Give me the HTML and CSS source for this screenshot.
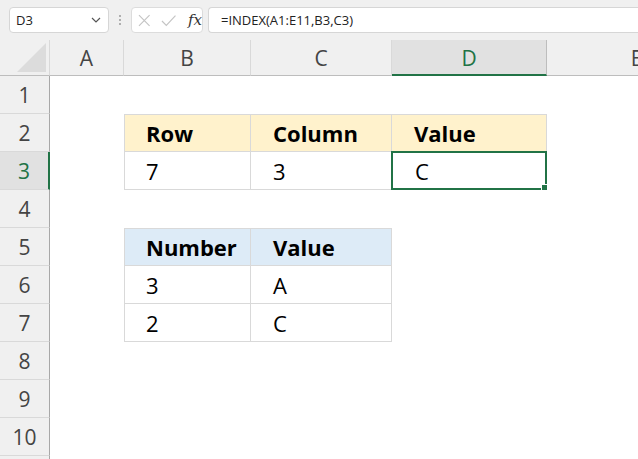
FILE: index.html
```html
<!DOCTYPE html>
<html>
<head>
<meta charset="utf-8">
<link rel="stylesheet" href="styles.css">
</head>
<body>
<div class="app">
  <div class="formula-bar">
    <div class="name-box">
      <span class="name-text">D3</span>
      <svg class="chev" width="10" height="6" viewBox="0 0 10 6"><path d="M1 1 L5 5 L9 1" fill="none" stroke="#555" stroke-width="1.2"/></svg>
    </div>
    <div class="dots"><span></span><span></span><span></span></div>
    <div class="fx-box">
      <svg width="13" height="13" viewBox="0 0 13 13"><path d="M1 1 L12 12 M12 1 L1 12" stroke="#c4c4c4" stroke-width="1.2" fill="none"/></svg>
      <svg width="16" height="13" viewBox="0 0 16 13"><path d="M1 7 L5.5 11.5 L15 1.5" stroke="#c4c4c4" stroke-width="1.2" fill="none"/></svg>
      <span class="fx">fx</span>
    </div>
    <div class="formula-input">=INDEX(A1:E11,B3,C3)</div>
  </div>
  <div class="sheet">
    <div class="corner"><div class="tri"></div></div>
    <div class="ch">A</div>
    <div class="ch">B</div>
    <div class="ch">C</div>
    <div class="ch sel">D</div>
    <div class="ch">E</div>

    <div class="rh">1</div><div class="c"></div><div class="c"></div><div class="c"></div><div class="c"></div><div class="c"></div>

    <div class="rh">2</div><div class="c"></div>
    <div class="c t y top left b">Row</div>
    <div class="c t y top b">Column</div>
    <div class="c t y top b">Value</div>
    <div class="c"></div>

    <div class="rh sel">3</div><div class="c"></div>
    <div class="c t left">7</div>
    <div class="c t">3</div>
    <div class="c t active">C</div>
    <div class="c"></div>

    <div class="rh">4</div><div class="c"></div><div class="c"></div><div class="c"></div><div class="c"></div><div class="c"></div>

    <div class="rh">5</div><div class="c"></div>
    <div class="c t bl top left b">Number</div>
    <div class="c t bl top b">Value</div>
    <div class="c"></div><div class="c"></div>

    <div class="rh">6</div><div class="c"></div>
    <div class="c t left">3</div>
    <div class="c t">A</div>
    <div class="c"></div><div class="c"></div>

    <div class="rh">7</div><div class="c"></div>
    <div class="c t left">2</div>
    <div class="c t">C</div>
    <div class="c"></div><div class="c"></div>

    <div class="rh">8</div><div class="c"></div><div class="c"></div><div class="c"></div><div class="c"></div><div class="c"></div>
    <div class="rh">9</div><div class="c"></div><div class="c"></div><div class="c"></div><div class="c"></div><div class="c"></div>
    <div class="rh">10</div><div class="c"></div><div class="c"></div><div class="c"></div><div class="c"></div><div class="c"></div>
    <div class="rh"></div><div class="c"></div><div class="c"></div><div class="c"></div><div class="c"></div><div class="c"></div>
  </div>
</div>
</body>
</html>
```

FILE: styles.css
```css
* { box-sizing: border-box; }
html, body { margin: 0; padding: 0; }
body {
  width: 638px;
  height: 459px;
  overflow: hidden;
  background: #f0f0f0;
  font-family: "Open Sans", "Noto Sans", sans-serif;
}
.app { display: flex; flex-direction: column; width: 638px; height: 459px; overflow: hidden; }
.formula-bar {
  height: 40px;
  flex: none;
  display: flex;
  align-items: flex-start;
  padding: 7px 0 0 9px;
  background: #f0f0f0;
}
.name-box {
  width: 100px;
  height: 26px;
  background: #fff;
  border: 1px solid #d6d6d6;
  border-radius: 4px;
  display: flex;
  align-items: center;
  justify-content: space-between;
  padding: 0 7px 0 6px;
}
.name-text { font-size: 13px; color: #222; }
.dots {
  width: 22px;
  height: 26px;
  display: flex;
  flex-direction: column;
  align-items: center;
  justify-content: center;
  gap: 2px;
}
.dots span { width: 2px; height: 2px; background: #9a9a9a; border-radius: 1px; }
.fx-box {
  width: 72px;
  height: 26px;
  background: #fff;
  border: 1px solid #dcdcdc;
  border-radius: 4px;
  display: flex;
  align-items: center;
  padding: 0 0 0 6px;
  gap: 10px;
}
.fx {
  font-family: "DejaVu Serif", "Liberation Serif", serif;
  font-style: italic;
  font-size: 15px;
  color: #333;
  margin-left: 2px;
}
.formula-input {
  margin-left: 5px;
  flex: 1;
  height: 26px;
  background: #fff;
  border: 1px solid #d6d6d6;
  border-right: none;
  border-radius: 4px 0 0 4px;
  font-size: 13px;
  color: #222;
  line-height: 24px;
  padding-left: 12px;
}
.sheet {
  display: grid;
  grid-template-columns: 50px 74px 127px 141px 155px 180px;
  grid-template-rows: 36px repeat(10, 38px) 38px;
  width: 727px;
  background: #fff;
}
.corner {
  background: #f0f0f0;
  border-bottom: 1px solid #bdbdbd;
  border-right: 1px solid #d9d9d9;
  position: relative;
}
.tri {
  position: absolute;
  right: 3px;
  bottom: 3px;
  width: 0;
  height: 0;
  border-left: 29px solid transparent;
  border-bottom: 29px solid #dcdcdc;
}
.ch {
  background: #f0f0f0;
  border-bottom: 1px solid #bdbdbd;
  border-right: 1px solid #d9d9d9;
  display: flex;
  align-items: center;
  justify-content: center;
  font-size: 21px;
  color: #444;
  padding-top: 1px;
}
.ch.sel {
  background: #e1e1e1;
  color: #217346;
  border-bottom: 2px solid #217346;
  border-right: 1px solid #bdbdbd;
}
.rh {
  background: #f0f0f0;
  border-right: 1px solid #a8a8a8;
  border-bottom: 1px solid #d9d9d9;
  display: flex;
  align-items: center;
  justify-content: center;
  font-size: 21px;
  color: #444;
}
.rh.sel {
  background: #e1e1e1;
  color: #217346;
  border-right: 2px solid #217346;
}
.c {
  background: #fff;
  display: flex;
  align-items: center;
  font-size: 22px;
  color: #000;
  padding-left: 22px;
  position: relative;
}
.t {
  border-right: 1px solid #d9d9d9;
  border-bottom: 1px solid #d9d9d9;
}
.t.top { border-top: 1px solid #d9d9d9; }
.t.left { border-left: 1px solid #d9d9d9; padding-left: 21px; }
.y { background: #fff2cc; }
.bl { background: #ddebf7; }
.b { font-weight: 700; }
.active {
  border: 2px solid #217346;
  margin: -1px 0 0 -1px;
  padding-left: 22px;
}
.active::after {
  content: "";
  position: absolute;
  right: -4px;
  bottom: -4px;
  width: 6px;
  height: 6px;
  background: #217346;
  border: 1px solid #fff;
}
```
